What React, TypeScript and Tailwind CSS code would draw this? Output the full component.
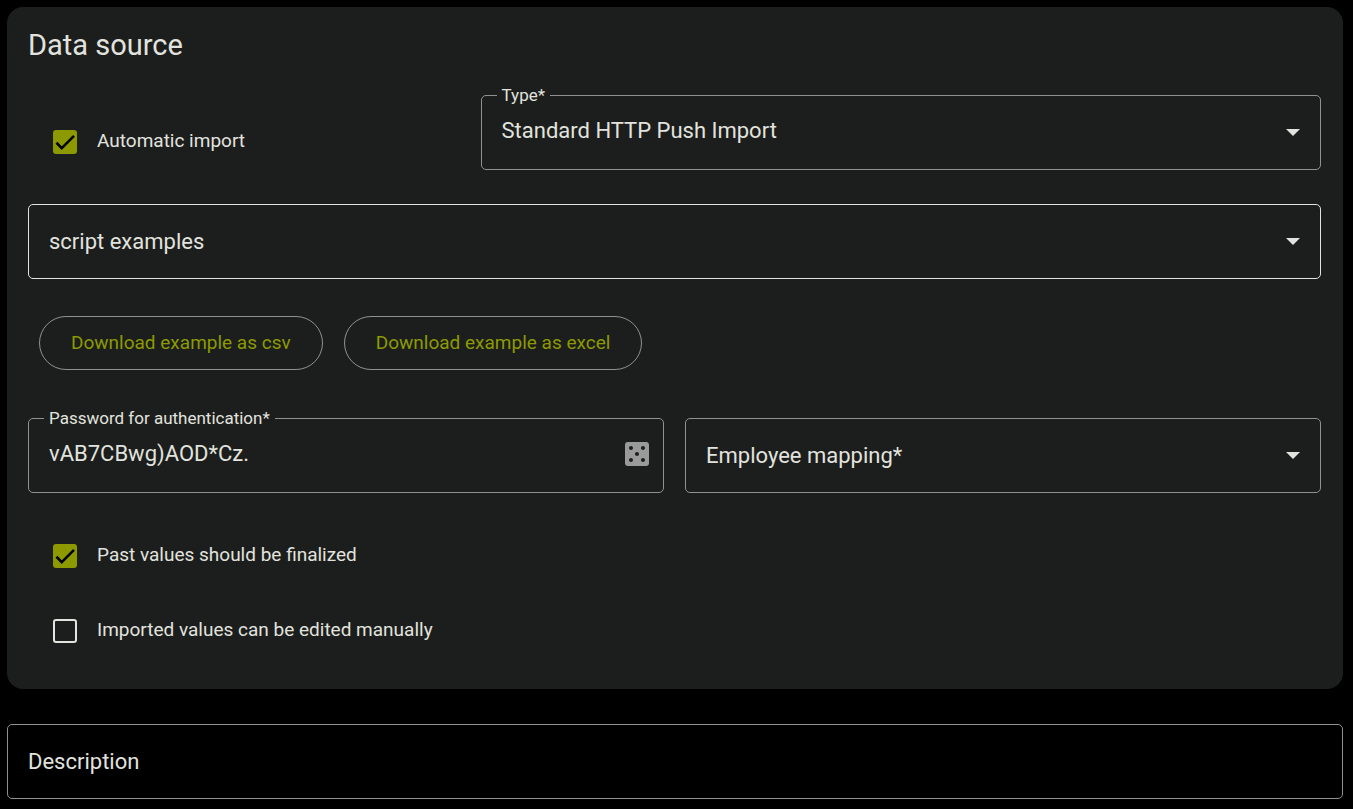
import { useId, useState } from "react";
import type { ReactNode } from "react";
import { MdCasino } from "react-icons/md";

type FieldShellProps = {
  id: string;
  label: string;
  floating: boolean;
  bright?: boolean;
  surface?: string;
  children: ReactNode;
};

type SelectFieldProps = {
  label: string;
  initial?: string;
  bright?: boolean;
  options: string[];
};

type CheckFieldProps = {
  label: string;
  initial?: boolean;
};

const IMPORT_TYPES = ["Standard HTTP Push Import"];
const CONTROL =
  "h-full w-full appearance-none rounded-[5px] bg-transparent pb-1 pl-5 text-[22px] text-[#e2e3df] outline-none";

// The label rests inside the empty field and moves onto the border once there is a value.
function FieldShell({
  id,
  label,
  floating,
  bright,
  surface = "bg-[#1c1e1d]",
  children,
}: FieldShellProps) {
  return (
    <div
      className={`relative flex h-[75px] items-center rounded-[5px] border ${
        bright ? "border-[#e2e3df]" : "border-[#919191]"
      }`}
    >
      {children}
      <label
        htmlFor={id}
        className={`pointer-events-none absolute text-[#e2e3df] ${
          floating
            ? `-top-3 left-[15px] px-[5px] text-[17px] leading-[22px] ${surface}`
            : "left-5 text-[22px] leading-8"
        }`}
      >
        {label}
      </label>
    </div>
  );
}

function SelectField({ label, initial = "", bright, options }: SelectFieldProps) {
  const id = useId();
  const [value, setValue] = useState(initial);

  return (
    <FieldShell id={id} label={label} floating={value !== ""} bright={bright}>
      <select
        id={id}
        value={value}
        onChange={(event) => setValue(event.target.value)}
        className={`${CONTROL} pr-14`}
      >
        {initial ? null : <option value="" />}
        {options.map((option) => (
          <option key={option} value={option}>
            {option}
          </option>
        ))}
      </select>
      <svg
        viewBox="0 0 14 7"
        className="pointer-events-none absolute right-5 h-[7px] w-[14px] fill-[#e2e3df]"
        aria-hidden="true"
      >
        <path d="M0 0h14L7 7z" />
      </svg>
    </FieldShell>
  );
}

function CheckField({ label, initial = false }: CheckFieldProps) {
  const [checked, setChecked] = useState(initial);

  return (
    <label className="flex h-14 items-center gap-5 pl-[25px] text-[19px] text-[#e2e3df]">
      <span className="grid size-6 shrink-0 place-items-center">
        <input
          type="checkbox"
          checked={checked}
          onChange={(event) => setChecked(event.target.checked)}
          className="col-start-1 row-start-1 size-6 appearance-none rounded-[3px] border-2 border-[#e2e3df] checked:border-[#8c9a00] checked:bg-[#8c9a00]"
        />
        {checked ? (
          <svg
            viewBox="0 0 24 24"
            className="pointer-events-none col-start-1 row-start-1 size-5 fill-none stroke-black"
            strokeWidth="3.12"
            aria-hidden="true"
          >
            <path d="M1.73 12.91 8.1 19.28 22.79 4.59" />
          </svg>
        ) : null}
      </span>
      <span className="pb-[2px]">{label}</span>
    </label>
  );
}

function OutlineButton({ children }: { children: ReactNode }) {
  return (
    <button
      type="button"
      className="h-[54px] rounded-full border border-[#919191] px-[31px] text-[19px] text-[#8c9a00]"
    >
      {children}
    </button>
  );
}

export default function App() {
  const passwordId = useId();
  const descriptionId = useId();
  const [password, setPassword] = useState("vAB7CBwg)AOD*Cz.");
  const [description, setDescription] = useState("");

  function randomizePassword() {
    const chars = "ABCDEFGHJKLMNPQRSTUVWXYZabcdefghijkmnpqrstuvwxyz23456789()*.!";
    const next = Array.from({ length: 16 }, () => chars[Math.floor(Math.random() * chars.length)]);
    setPassword(next.join(""));
  }

  return (
    <main className="min-h-screen bg-black py-[7px] pr-[10px] pl-[7px] font-['Roboto',sans-serif]">
      <section className="rounded-2xl bg-[#1c1e1d] pt-5 pr-[22px] pb-[30px] pl-[21px]">
        <h2 className="text-[29px] leading-9 text-[#e2e3df]">Data source</h2>

        <div className="mt-8 grid grid-cols-[35fr_65fr] items-end">
          <CheckField label="Automatic import" initial />
          <SelectField label="Type*" initial={IMPORT_TYPES[0]} options={IMPORT_TYPES} />
        </div>

        <div className="mt-[34px]">
          <SelectField label="script examples" bright options={["Python", "PowerShell", "curl"]} />
        </div>

        <div className="mt-[37px] flex flex-wrap gap-[21px] pl-[11px]">
          <OutlineButton>Download example as csv</OutlineButton>
          <OutlineButton>Download example as excel</OutlineButton>
        </div>

        <div className="mt-12 grid grid-cols-2 gap-[21px]">
          <FieldShell
            id={passwordId}
            label="Password for authentication*"
            floating={password !== ""}
          >
            <input
              id={passwordId}
              type="text"
              value={password}
              onChange={(event) => setPassword(event.target.value)}
              className={CONTROL}
            />
            <button
              type="button"
              aria-label="Generate password"
              onClick={randomizePassword}
              className="mr-[10px] mb-1 shrink-0 text-[#9a9a9a]"
            >
              <MdCasino size={32} />
            </button>
          </FieldShell>
          <SelectField label="Employee mapping*" options={["Employee number", "Email"]} />
        </div>

        <div className="mt-[35px] flex flex-col gap-[19px]">
          <CheckField label="Past values should be finalized" initial />
          <CheckField label="Imported values can be edited manually" />
        </div>
      </section>

      <div className="mt-[35px]">
        <FieldShell
          id={descriptionId}
          label="Description"
          floating={description !== ""}
          surface="bg-black"
        >
          <input
            id={descriptionId}
            type="text"
            value={description}
            onChange={(event) => setDescription(event.target.value)}
            className={CONTROL}
          />
        </FieldShell>
      </div>
    </main>
  );
}
